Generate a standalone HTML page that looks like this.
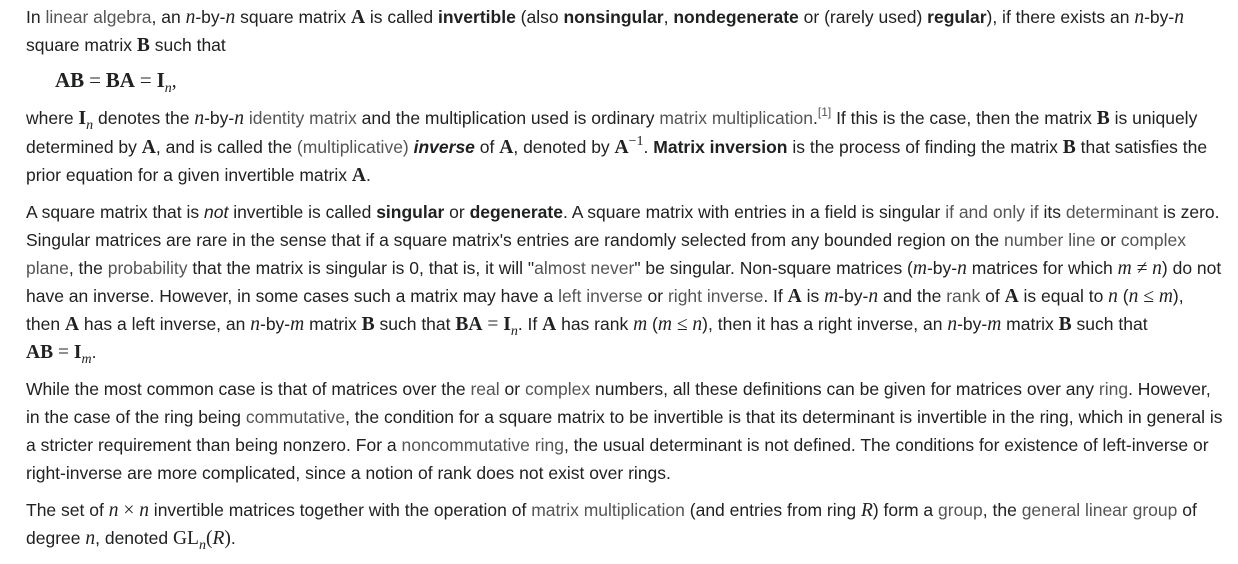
<!DOCTYPE html>
<html><head><meta charset="utf-8"><style>
body{margin:0;background:#fff;width:1238px;height:564px;overflow:hidden;font-family:"Liberation Sans",Arial,sans-serif;font-size:17.5px;color:#202122}
.l{position:absolute;left:26px;white-space:nowrap;line-height:28px}
a{color:#555;text-decoration:none}
.m{font-family:"Liberation Serif",serif;font-size:19.5px}
.i{font-family:"Liberation Serif",serif;font-style:italic;font-size:19.5px}
.b{font-family:"Liberation Serif",serif;font-weight:bold;font-size:19.5px}
sub{font-size:13px;line-height:0;vertical-align:baseline;position:relative;top:5px}
sup{font-size:12px;line-height:0;vertical-align:baseline;position:relative;top:-8px}
</style></head><body>
<div class="l" style="top:3px">In <a>linear algebra</a>, an <span class="i">n</span>-by-<span class="i">n</span> square matrix <span class="b">A</span> is called <b>invertible</b> (also <b>nonsingular</b>, <b>nondegenerate</b> or (rarely used) <b>regular</b>), if there exists an <span class="i">n</span>-by-<span class="i">n</span></div>
<div class="l" style="top:31px">square matrix <span class="b">B</span> such that</div>
<div class="l" style="top:66px;left:55px"><span class="b" style="font-size:21px">AB</span> <span class="m" style="font-size:21px">=</span> <span class="b" style="font-size:21px">BA</span> <span class="m" style="font-size:21px">=</span> <span class="b" style="font-size:21px">I</span><sub class="i" style="font-size:14px">n</sub><span class="m">,</span></div>
<div class="l" style="top:104px">where <span class="b">I</span><sub class="i" style="font-size:14px">n</sub> denotes the <span class="i">n</span>-by-<span class="i">n</span> <a>identity matrix</a> and the multiplication used is ordinary <a>matrix multiplication</a>.<sup><a>[1]</a></sup> If this is the case, then the matrix <span class="b">B</span> is uniquely</div>
<div class="l" style="top:133px">determined by <span class="b">A</span>, and is called the <a>(multiplicative)</a> <b><i>inverse</i></b> of <span class="b">A</span>, denoted by <span class="b">A</span><sup class="m" style="font-size:14px">−1</sup>. <b>Matrix inversion</b> is the process of finding the matrix <span class="b">B</span> that satisfies the</div>
<div class="l" style="top:161px">prior equation for a given invertible matrix <span class="b">A</span>.</div>
<div class="l" style="top:198px">A square matrix that is <i>not</i> invertible is called <b>singular</b> or <b>degenerate</b>. A square matrix with entries in a field is singular <a>if and only if</a> its <a>determinant</a> is zero.</div>
<div class="l" style="top:226px">Singular matrices are rare in the sense that if a square matrix's entries are randomly selected from any bounded region on the <a>number line</a> or <a>complex</a></div>
<div class="l" style="top:254px"><a>plane</a>, the <a>probability</a> that the matrix is singular is 0, that is, it will "<a>almost never</a>" be singular. Non-square matrices (<span class="i">m</span>-by-<span class="i">n</span> matrices for which <span class="i">m</span> <span class="m">≠</span> <span class="i">n</span>) do not</div>
<div class="l" style="top:282px">have an inverse. However, in some cases such a matrix may have a <a>left inverse</a> or <a>right inverse</a>. If <span class="b">A</span> is <span class="i">m</span>-by-<span class="i">n</span> and the <a>rank</a> of <span class="b">A</span> is equal to <span class="i">n</span> (<span class="i">n</span> <span class="m">≤</span> <span class="i">m</span>),</div>
<div class="l" style="top:310px">then <span class="b">A</span> has a left inverse, an <span class="i">n</span>-by-<span class="i">m</span> matrix <span class="b">B</span> such that <span class="b">BA</span> <span class="m">=</span> <span class="b">I</span><sub class="i" style="font-size:14px">n</sub>. If <span class="b">A</span> has rank <span class="i">m</span> (<span class="i">m</span> <span class="m">≤</span> <span class="i">n</span>), then it has a right inverse, an <span class="i">n</span>-by-<span class="i">m</span> matrix <span class="b">B</span> such that</div>
<div class="l" style="top:338px"><span class="b">AB</span> <span class="m">=</span> <span class="b">I</span><sub class="i" style="font-size:14px">m</sub>.</div>
<div class="l" style="top:375px">While the most common case is that of matrices over the <a>real</a> or <a>complex</a> numbers, all these definitions can be given for matrices over any <a>ring</a>. However,</div>
<div class="l" style="top:403px">in the case of the ring being <a>commutative</a>, the condition for a square matrix to be invertible is that its determinant is invertible in the ring, which in general is</div>
<div class="l" style="top:431px">a stricter requirement than being nonzero. For a <a>noncommutative ring</a>, the usual determinant is not defined. The conditions for existence of left-inverse or</div>
<div class="l" style="top:459px">right-inverse are more complicated, since a notion of rank does not exist over rings.</div>
<div class="l" style="top:496px">The set of <span class="i">n</span> <span class="m">×</span> <span class="i">n</span> invertible matrices together with the operation of <a>matrix multiplication</a> (and entries from ring <span class="i">R</span>) form a <a>group</a>, the <a>general linear group</a> of</div>
<div class="l" style="top:524px">degree <span class="i">n</span>, denoted <span class="m">GL</span><sub class="i" style="font-size:14px">n</sub><span class="m">(</span><span class="i">R</span><span class="m">)</span>.</div>
</body></html>
